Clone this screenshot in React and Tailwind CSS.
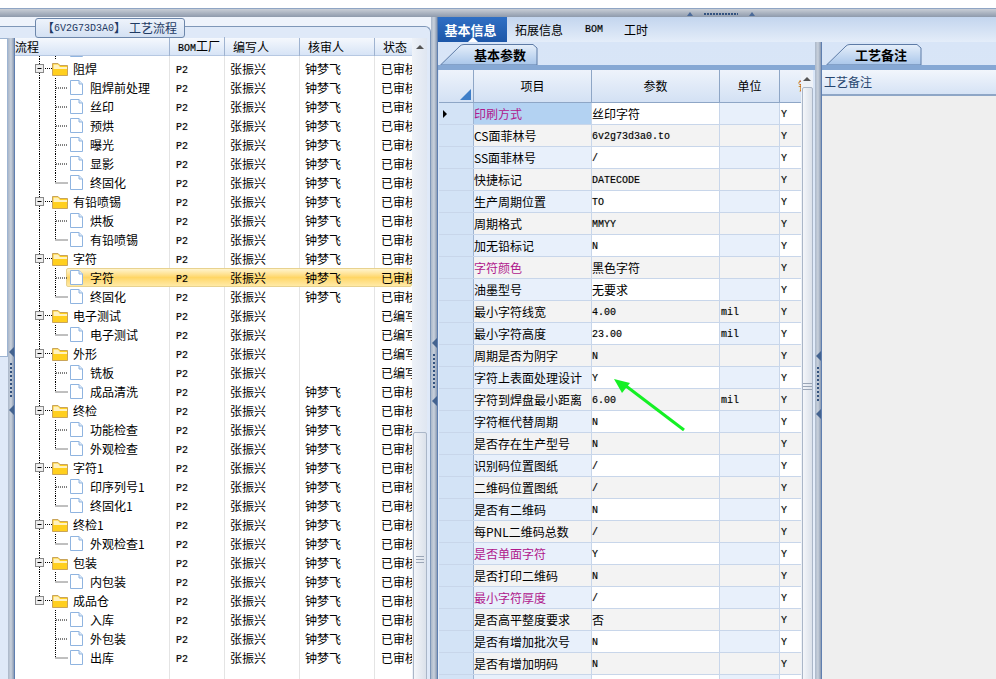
import React from 'react';

const cjk = '"Noto Sans CJK SC", "DejaVu Sans", sans-serif';

// 流程树 rows: f = folder, l = leaf, e = last leaf of its folder
const A = ['张振兴', '钟梦飞', '已审核'];
const B = ['张振兴', '', '已编写'];
const treeRows = [
  ['f', '阻焊', A], ['l', '阻焊前处理', A], ['l', '丝印', A], ['l', '预烘', A], ['l', '曝光', A], ['l', '显影', A], ['e', '终固化', A],
  ['f', '有铅喷锡', A], ['l', '烘板', A], ['e', '有铅喷锡', A],
  ['f', '字符', A], ['l', '字符', A, true], ['e', '终固化', A],
  ['f', '电子测试', B], ['e', '电子测试', B],
  ['f', '外形', B], ['l', '铣板', B], ['e', '成品清洗', A],
  ['f', '终检', A], ['l', '功能检查', A], ['e', '外观检查', A],
  ['f', '字符1', A], ['l', '印序列号1', A], ['e', '终固化1', A],
  ['f', '终检1', A], ['e', '外观检查1', A],
  ['f', '包装', A], ['e', '内包装', A],
  ['f', '成品仓', A], ['l', '入库', A], ['l', '外包装', A], ['e', '出库', A],
];
const lastFolder = 28;

// 参数 rows
const M = '#b0188c';
const paramRows = [
  ['印刷方式', '丝印字符', '', M],
  ['CS面菲林号', '6v2g73d3a0.to', ''],
  ['SS面菲林号', '/', ''],
  ['快捷标记', 'DATECODE', ''],
  ['生产周期位置', 'TO', ''],
  ['周期格式', 'MMYY', ''],
  ['加无铅标记', 'N', ''],
  ['字符颜色', '黑色字符', '', M],
  ['油墨型号', '无要求', ''],
  ['最小字符线宽', '4.00', 'mil'],
  ['最小字符高度', '23.00', 'mil'],
  ['周期是否为阴字', 'N', ''],
  ['字符上表面处理设计', 'Y', ''],
  ['字符到焊盘最小距离', '6.00', 'mil'],
  ['字符框代替周期', 'N', ''],
  ['是否存在生产型号', 'N', ''],
  ['识别码位置图纸', '/', ''],
  ['二维码位置图纸', '/', ''],
  ['是否有二维码', 'N', ''],
  ['每PNL二维码总数', '/', ''],
  ['是否单面字符', 'Y', '', M],
  ['是否打印二维码', 'N', ''],
  ['最小字符厚度', '/', '', M],
  ['是否高平整度要求', '否', ''],
  ['是否有增加批次号', 'N', ''],
  ['是否有增加明码', 'N', ''],
  ['', '', ''],
];

const Mono = ({ children }) => (
  <span className="font-['Liberation_Mono'] text-[10px] [text-shadow:0_0_1px_rgba(0,0,0,0.35)]">{children}</span>
);

const dots = { stroke: '#000', strokeDasharray: '1 1', fill: 'none' };

const FolderGlyph = ({ noDown }) => (
  <svg width="54" height="19" className="shrink-0">
    <path d="M24.5 0V5" {...dots} />
    {!noDown && <path d="M24.5 14V19" {...dots} />}
    <path d="M30 9.5H37" {...dots} />
    <rect x="20.5" y="5.5" width="8" height="8" fill="#eeeeee" stroke="#888888" />
    <path d="M22.5 9.5H26.5" stroke="#000" />
    <path d="M37.5 16.5V4.5H43L45 6.5H52.5V16.5Z" fill="#ffcf1e" stroke="#c9a45a" />
    <path d="M38.5 5.5H43L45 8H52V10H38.5Z" fill="#fff2c0" />
  </svg>
);

const LeafGlyph = ({ last, noTrunk }) => (
  <svg width="54" height="19" className="shrink-0">
    {!noTrunk && <path d="M24.5 0V19" {...dots} />}
    <path d={last ? 'M40.5 0V10H53' : 'M40.5 0V19M41 10H53'} {...dots} />
  </svg>
);

const Doc = () => (
  <svg width="15" height="17" className="shrink-0">
    <path d="M1.5 1.5H10L13.5 5V15.5H1.5Z" fill="#fff" stroke="#8fb4e0" />
    <path d="M10 1.5V5H13.5" fill="#dce9f8" stroke="#8fb4e0" />
  </svg>
);

const TreeRow = ({ type, name, cols, selected, noDown, noTrunk }) => (
  <div className="relative flex h-[19px] items-center text-[12px] text-black">
    {selected && (
      <div className="absolute inset-y-0 left-[51px] right-0 rounded-[2px] border border-[#e8d28f] bg-gradient-to-b from-[#fff4cc] via-[#ffd665] to-[#ffeaa6]" />
    )}
    <div className="relative flex h-full w-[155px] shrink-0 items-center">
      {type === 'f' ? (
        <>
          <FolderGlyph noDown={noDown} />
          <span className="ml-[4px]">{name}</span>
        </>
      ) : (
        <>
          <LeafGlyph last={type === 'e'} noTrunk={noTrunk} />
          <Doc />
          <span className="ml-[6px]">{name}</span>
        </>
      )}
    </div>
    <div className="relative w-[55px] shrink-0 pl-[6px]"><Mono>P2</Mono></div>
    <div className="relative w-[75px] shrink-0 pl-[5px]">{cols[0]}</div>
    <div className="relative w-[75px] shrink-0 pl-[5px]">{cols[1]}</div>
    <div className="relative w-[37px] shrink-0 overflow-hidden whitespace-nowrap pl-[6px]">{cols[2]}</div>
  </div>
);

const Splitter = ({ className }) => (
  <div className={`flex w-[7px] shrink-0 flex-col items-center border-r border-[#5f7fb0] bg-gradient-to-r from-[#aab7c9] via-[#c9d1dc] to-[#8a9ab2] ${className}`}>
    <div className="h-0 w-0 border-y-[5px] border-r-[5px] border-y-transparent border-r-[#44638f]" />
    <div className="mt-[6px] h-[36px] w-[2px] [background:repeating-linear-gradient(#33527f_0_2px,transparent_2px_4px)]" />
    <div className="mt-[6px] h-0 w-0 border-y-[5px] border-r-[5px] border-y-transparent border-r-[#44638f]" />
  </div>
);

const TabShape = ({ label, width, pad }) => (
  <div className="relative flex h-[21px] items-center justify-center text-[13px] font-bold text-black" style={{ width }}>
    <svg width={width} height="21" className="absolute inset-0">
      <defs>
        <linearGradient id="tabfill" x1="0" y1="0" x2="0" y2="1">
          <stop offset="0" stopColor="#e6effa" />
          <stop offset="1" stopColor="#a9c6ea" />
        </linearGradient>
      </defs>
      <path d={`M0.5 21L20 2Q21.5 0.5 24 0.5H${width - 5}L${width - 1} 4V21Z`} fill="url(#tabfill)" stroke="#5d7ba6" />
    </svg>
    <span className="relative" style={{ paddingLeft: pad }}>{label}</span>
  </div>
);

export default function App() {
  return (
    <div className="relative flex h-[679px] w-[996px] flex-col overflow-hidden bg-white text-[12px]" style={{ fontFamily: cjk }}>
      <div className="h-[8px] shrink-0 bg-white" />
      {/* 顶部分隔条 */}
      <div className="relative h-[9px] shrink-0 border-t border-[#8fa5c4] bg-gradient-to-b from-[#c9ced6] to-[#8e9aac]">
        <div className="absolute left-[687px] top-[3px] flex items-center gap-[11px]">
          <div className="h-0 w-0 border-x-[3px] border-b-[4px] border-x-transparent border-b-[#4b6a98]" />
          <div className="h-[2px] w-[34px] [background:repeating-linear-gradient(90deg,#33527f_0_2px,transparent_2px_3px)]" />
          <div className="h-0 w-0 border-x-[3px] border-b-[4px] border-x-transparent border-b-[#4b6a98]" />
        </div>
      </div>

      <div className="flex min-h-0 flex-1 bg-[#d5e3f5]">
        {/* 工艺流程 */}
        <div className="relative flex w-[431px] shrink-0 flex-col bg-[#eef3fb]">
          <div className="h-[9px] shrink-0" />
          <div className="flex min-h-0 flex-1 rounded-tr-[6px] border-r border-t border-[#7f97b8] bg-[#dfe9f8] pt-[11px]">
            <div className="flex w-[8px] shrink-0 flex-col">
              <div className="h-[319px] border-y border-r border-[#9db4d2] bg-white" />
            </div>
            <Splitter className="pt-[309px]" />
            <div className="flex w-[397px] min-w-0 shrink-0 flex-col bg-white">
              <div className="flex h-[18px] shrink-0 items-center border-b border-[#b6c8e2] bg-gradient-to-b from-[#f5f8fd] to-[#d7e4f6] text-black">
                <div className="w-[155px] shrink-0 border-r border-[#9fb3d0]">流程</div>
                <div className="w-[55px] shrink-0 border-r border-[#9fb3d0] pl-[8px]"><Mono>BOM</Mono>工厂</div>
                <div className="w-[75px] shrink-0 border-r border-[#9fb3d0] pl-[8px]">编写人</div>
                <div className="w-[75px] shrink-0 border-r border-[#9fb3d0] pl-[8px]">核审人</div>
                <div className="w-[37px] shrink-0 pl-[8px]">状态</div>
              </div>
              <div className="relative min-h-0 flex-1 overflow-hidden bg-[linear-gradient(90deg,transparent_154px,#e4e4e4_154px,#e4e4e4_155px,transparent_155px,transparent_209px,#e4e4e4_209px,#e4e4e4_210px,transparent_210px,transparent_284px,#e4e4e4_284px,#e4e4e4_285px,transparent_285px,transparent_359px,#e4e4e4_359px,#e4e4e4_360px,transparent_360px)]">
                <div className="-mt-[16px]">
                  <TreeRow type="l" name="" cols={['', '', '']} />
                  {treeRows.map((r, i) => (
                    <TreeRow
                      key={i}
                      type={r[0]}
                      name={r[1]}
                      cols={r[2]}
                      selected={r[3]}
                      noDown={i === lastFolder}
                      noTrunk={i > lastFolder}
                    />
                  ))}
                </div>
              </div>
            </div>
            {/* 滚动条 */}
            <div className="flex w-[15px] shrink-0 flex-col items-center bg-gradient-to-r from-[#eef2f8] to-[#dfe6f1]">
              <div className="mt-[7px] h-0 w-0 border-x-[4px] border-b-[4px] border-x-transparent border-b-[#555]" />
              <div className="mt-[383px] flex h-[254px] w-[14px] shrink-0 items-center justify-center rounded-t-[2px] border border-[#aab6c8] bg-gradient-to-r from-[#f4f6fa] to-[#dbe1ea]">
                <div className="h-[7px] w-[8px] border-y border-[#9aa5b6] [background:linear-gradient(#9aa5b6,#9aa5b6)_center/100%_1px_no-repeat]" />
              </div>
            </div>
          </div>
          {/* 标题框 */}
          <div className="absolute left-[35px] top-[1px] flex h-[20px] w-[150px] items-center whitespace-nowrap rounded-[3px] border border-[#6d87ab] bg-gradient-to-b from-[#eef3fb] to-[#d4e1f3] pl-[6px] text-[#1f3a63]">
            【<span className="font-['Liberation_Mono'] text-[10px]">6V2G73D3A0</span>】<span className="ml-[3px]">工艺流程</span>
          </div>
        </div>

        <Splitter className="pt-[321px]" />

        {/* 基本信息 */}
        <div className="flex min-w-0 flex-1 flex-col">
          <div className="flex h-[25px] shrink-0 items-stretch bg-gradient-to-b from-[#c3d5ee] to-[#e4edf9] text-[12px] text-black">
            <div className="relative flex w-[69px] items-center justify-center bg-gradient-to-b from-[#2f6fc4] to-[#1d57a8] pr-[4px] text-[13px] font-bold text-white">
              基本信息
              <div className="absolute bottom-0 left-1/2 h-0 w-0 -translate-x-1/2 border-x-[5px] border-b-[5px] border-x-transparent border-b-white" />
            </div>
            <div className="ml-[8px] flex items-center">拓展信息</div>
            <div className="ml-[22px] flex items-center"><Mono>BOM</Mono></div>
            <div className="ml-[21px] flex items-center">工时</div>
          </div>

          <div className="flex min-h-0 flex-1">
            <div className="flex w-[377px] shrink-0 flex-col bg-gradient-to-b from-[#d8e5f7] to-[#e9f0fb] pt-[2px]">
              <div className="ml-[2px] h-[21px] shrink-0"><TabShape label="基本参数" width={98} pad={22} /></div>
              <div className="flex min-h-0 flex-1 flex-col border-t-[5px] border-[#86a8d4] pl-[1px] pr-[1px]">
                <div className="flex min-h-0 flex-1">
                  <div className="flex w-[362px] shrink-0 flex-col">
                    <div className="flex h-[33px] shrink-0 items-center border-b border-[#8ea6c6] bg-gradient-to-b from-[#eef3fb] to-[#d3e1f4] text-center">
                      <div className="relative h-full w-[35px] shrink-0 border-r border-[#8ea6c6]">
                        <div className="absolute bottom-[2px] right-[2px] h-0 w-0 border-b-[11px] border-l-[11px] border-b-[#3f7fc8] border-l-transparent" />
                      </div>
                      <div className="flex h-full w-[118px] shrink-0 items-center justify-center border-r border-[#8ea6c6]">项目</div>
                      <div className="flex h-full w-[128px] shrink-0 items-center justify-center border-r border-[#8ea6c6]">参数</div>
                      <div className="flex h-full w-[60px] shrink-0 items-center justify-center border-r border-[#8ea6c6]">单位</div>
                      <div className="flex h-full w-[21px] shrink-0 items-center overflow-hidden pl-[18px] whitespace-nowrap text-[#c06a1c]">
                        锁定
                      </div>
                    </div>
                    {paramRows.map((r, i) => {
                      const odd = i % 2 === 1;
                      const bg = odd ? 'bg-[#f3f3f3]' : 'bg-white';
                      const tint = odd ? 'bg-[#f3f3f3]' : 'bg-[#e8f0fb]';
                      const isCjkVal = /[\u4e00-\u9fa5]/.test(r[1]);
                      return (
                        <div key={i} className={`flex h-[22px] shrink-0 items-center border-b border-[#c8d6ea] ${bg}`}>
                          <div className="flex h-full w-[35px] shrink-0 items-center border-r border-[#9fb5d3] bg-[#d3e3f6] pl-[4px]">
                            {i === 0 && <div className="h-0 w-0 border-y-[4px] border-l-[4px] border-y-transparent border-l-black" />}
                          </div>
                          <div className={`flex h-full w-[118px] shrink-0 items-center border-r border-[#c8d6ea] ${i === 0 ? 'bg-[#b3d2f2]' : tint}`} style={{ color: r[3] || '#000' }}>
                            {r[0]}
                          </div>
                          <div className="flex h-full w-[128px] shrink-0 items-center border-r border-[#c8d6ea] pt-[1px]">
                            {isCjkVal ? r[1] : <Mono>{r[1]}</Mono>}
                          </div>
                          <div className={`flex h-full w-[60px] shrink-0 items-center border-r border-[#c8d6ea] pt-[1px] pl-[1px] ${tint}`}>
                            <Mono>{r[2]}</Mono>
                          </div>
                          <div className="flex h-full w-[21px] shrink-0 items-center pt-[1px] pl-[1px]">
                            {r[0] && <Mono>Y</Mono>}
                          </div>
                        </div>
                      );
                    })}
                  </div>
                  <div className="flex w-[12px] shrink-0 flex-col items-center bg-[#eef2f8]">
                    <div className="mt-[7px] h-0 w-0 border-x-[4px] border-b-[4px] border-x-transparent border-b-[#555]" />
                    <div className="mt-[6px] flex h-[598px] w-[11px] shrink-0 items-center justify-center rounded-t-[2px] border border-[#aab6c8] bg-gradient-to-r from-[#f4f6fa] to-[#dbe1ea]">
                      <div className="h-[7px] w-[9px] border-y border-[#9aa5b6] [background:linear-gradient(#9aa5b6,#9aa5b6)_center/100%_1px_no-repeat]" />
                    </div>
                  </div>
                </div>
              </div>
            </div>

            <Splitter className="pt-[309px]" />

            {/* 工艺备注 */}
            <div className="flex min-w-0 flex-1 flex-col bg-gradient-to-b from-[#d8e5f7] to-[#e9f0fb] pt-[2px]">
              <div className="ml-[4px] h-[21px] shrink-0"><TabShape label="工艺备注" width={96} pad={14} /></div>
              <div className="flex min-h-0 flex-1 flex-col border-t-[5px] border-[#86a8d4]">
                <div className="flex h-[26px] shrink-0 items-center border-b-2 border-[#8ea6c6] bg-gradient-to-b from-[#f2f6fc] to-[#d6e3f5] pl-[2px] text-[#27466f]">工艺备注</div>
                <div className="flex-1 bg-[#efefef]" />
              </div>
            </div>
          </div>
        </div>
      </div>

      {/* 绿色箭头 */}
      <svg width="996" height="679" className="pointer-events-none absolute left-0 top-0">
        <path d="M684 430L626 386" stroke="#14f024" strokeWidth="3" />
        <path d="M614 379L630 383L622 393Z" fill="#14f024" />
      </svg>
    </div>
  );
}
